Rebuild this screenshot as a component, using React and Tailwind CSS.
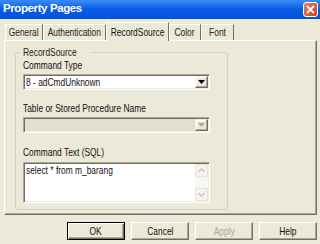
import React from "react";

const sunken =
  "border border-t-[#ACA899] border-l-[#ACA899] border-r-white border-b-white shadow-[inset_1px_1px_0_#716F64,inset_-1px_-1px_0_#F1EFE2]";

function T({ children, center }) {
  return (
    <span
      className={
        "inline-block whitespace-nowrap scale-x-[0.8] " +
        (center ? "origin-center" : "origin-left")
      }
    >
      {children}
    </span>
  );
}

function Arrow({ disabled }) {
  return (
    <svg width="7" height="4" viewBox="0 0 7 4">
      <path d="M0 0H7L3.5 4Z" fill={disabled ? "#ACA899" : "#000"} />
    </svg>
  );
}

function ComboButton({ disabled }) {
  return (
    <div className="w-[13px] h-full flex items-center justify-center bg-[#ECE9D8] border border-t-[#F1EFE2] border-l-[#F1EFE2] border-r-[#716F64] border-b-[#716F64] shadow-[inset_-1px_-1px_0_#ACA899,inset_1px_1px_0_#fff]">
      <Arrow disabled={disabled} />
    </div>
  );
}

function Chevron({ up }) {
  return (
    <svg width="7" height="5" viewBox="0 0 7 5">
      <path
        d={up ? "M0.5 4L3.5 1L6.5 4" : "M0.5 1L3.5 4L6.5 1"}
        fill="none"
        stroke="#C5C2B8"
        strokeWidth="1.3"
      />
    </svg>
  );
}

function Button({ children, isDefault, disabled }) {
  return (
    <div
      className={
        "w-[58px] h-[18px] flex items-center justify-center text-[10.5px] leading-none " +
        (isDefault
          ? "border border-[#000] shadow-[inset_1px_1px_0_#fff,inset_-1px_-1px_0_#716F64,inset_-2px_-2px_0_#ACA899]"
          : "border border-t-white border-l-white border-r-[#716F64] border-b-[#716F64] shadow-[inset_-1px_-1px_0_#ACA899]") +
        (disabled ? " text-[#ACA899]" : " text-[#111]")
      }
    >
      <T center>{children}</T>
    </div>
  );
}

export default function App() {
  const tabs = [
    { label: "General", w: "w-[38px]" },
    { label: "Authentication", w: "w-[63px]" },
    { label: "RecordSource", w: "w-[63px]", active: true },
    { label: "Color", w: "w-[32px]" },
    { label: "Font", w: "w-[33px]" },
  ];
  return (
    <div
      className="w-[320px] h-[244px] bg-[#ECE9D8] flex flex-col overflow-hidden text-[#111]"
      style={{ fontFamily: '"Liberation Sans", Arial, sans-serif' }}
    >
      {/* Title bar */}
      <div className="h-[19px] shrink-0 flex items-center justify-between pl-[3px] pr-[2px] bg-gradient-to-b from-[#3C8CF6] via-[#0A5CE6] to-[#0554DC] border-b border-[#0A4ECF]">
        <span className="text-white font-bold text-[11.5px] leading-none tracking-[-0.4px]">
          Property Pages
        </span>
        <div className="w-[15px] h-[15px] rounded-[3px] border border-white bg-gradient-to-br from-[#E9805F] to-[#C8421E] flex items-center justify-center">
          <svg width="9" height="9" viewBox="0 0 9 9">
            <path d="M1 1L8 8M8 1L1 8" stroke="#fff" strokeWidth="1.8" />
          </svg>
        </div>
      </div>

      {/* Tabs */}
      <div className="h-[18px] mt-[3px] shrink-0 flex items-end pl-[5px]">
        {tabs.map((t) =>
          t.active ? (
            <div
              key={t.label}
              className={
                t.w +
                " h-[19px] -mb-[1px] relative z-10 bg-[#ECE9D8] border-t border-l border-white border-r border-r-[#716F64] flex items-center justify-center text-[10.5px] leading-none"
              }
            >
              <T center>{t.label}</T>
            </div>
          ) : (
            <div
              key={t.label}
              className={
                t.w +
                " h-[16px] bg-[#ECE9D8] border-t border-l border-white border-r border-r-[#716F64] flex items-center justify-center text-[10.5px] leading-none text-[#222]"
              }
            >
              <T center>{t.label}</T>
            </div>
          )
        )}
      </div>

      {/* Panel */}
      <div className="ml-[4px] w-[313px] h-[175px] shrink-0 border border-t-white border-l-white border-r-[#716F64] border-b-[#716F64] shadow-[inset_-1px_-1px_0_#ACA899] pl-[10px] pt-[11px]">
        <div className="relative w-[213px] h-[158px] border border-[#D0D0BF] rounded-[3px] px-[7px] pt-[6px]">
          <span className="absolute -top-[7px] left-[5px] px-[2px] bg-[#ECE9D8] text-[10.5px] leading-[12px] text-[#222]">
            <T>RecordSource</T>
          </span>
          <div className="flex flex-col">
            <div className="h-[12px] text-[10.5px] leading-[12px]">
              <T>Command Type</T>
            </div>
            <div className={"mt-[3px] h-[16px] w-[187px] bg-white flex items-stretch " + sunken}>
              <div className="flex-1 pl-[2px] text-[10.5px] leading-[14px]">
                <T>8 - adCmdUnknown</T>
              </div>
              <div className="p-[1px] pl-0">
                <ComboButton />
              </div>
            </div>
            <div className="mt-[12px] h-[12px] text-[10.5px] leading-[12px]">
              <T>Table or Stored Procedure Name</T>
            </div>
            <div className={"mt-[3px] h-[16px] w-[187px] bg-[#E2DFD1] flex items-stretch " + sunken}>
              <div className="flex-1" />
              <div className="p-[1px] pl-0">
                <ComboButton disabled />
              </div>
            </div>
            <div className="mt-[13px] h-[12px] text-[10.5px] leading-[12px]">
              <T>Command Text (SQL)</T>
            </div>
            <div className={"mt-[4px] h-[41px] w-[187px] bg-white flex " + sunken}>
              <div className="flex-1 pl-[2px] pt-[1px] text-[10.5px] leading-[12px]">
                <T>select * from m_barang</T>
              </div>
              <div className="w-[13px] mr-[1px] my-[1px] flex flex-col justify-between bg-[#F7F6F1]">
                <div className="h-[13px] flex items-center justify-center rounded-[2px] bg-[#F4F3EE] border border-[#E4E2DA]">
                  <Chevron up />
                </div>
                <div className="h-[13px] flex items-center justify-center rounded-[2px] bg-[#F4F3EE] border border-[#E4E2DA]">
                  <Chevron />
                </div>
              </div>
            </div>
          </div>
        </div>
      </div>

      {/* Buttons */}
      <div className="mt-[7px] flex justify-end gap-[6px] pr-[3px]">
        <Button isDefault>OK</Button>
        <Button>Cancel</Button>
        <Button disabled>Apply</Button>
        <Button>Help</Button>
      </div>
    </div>
  );
}
